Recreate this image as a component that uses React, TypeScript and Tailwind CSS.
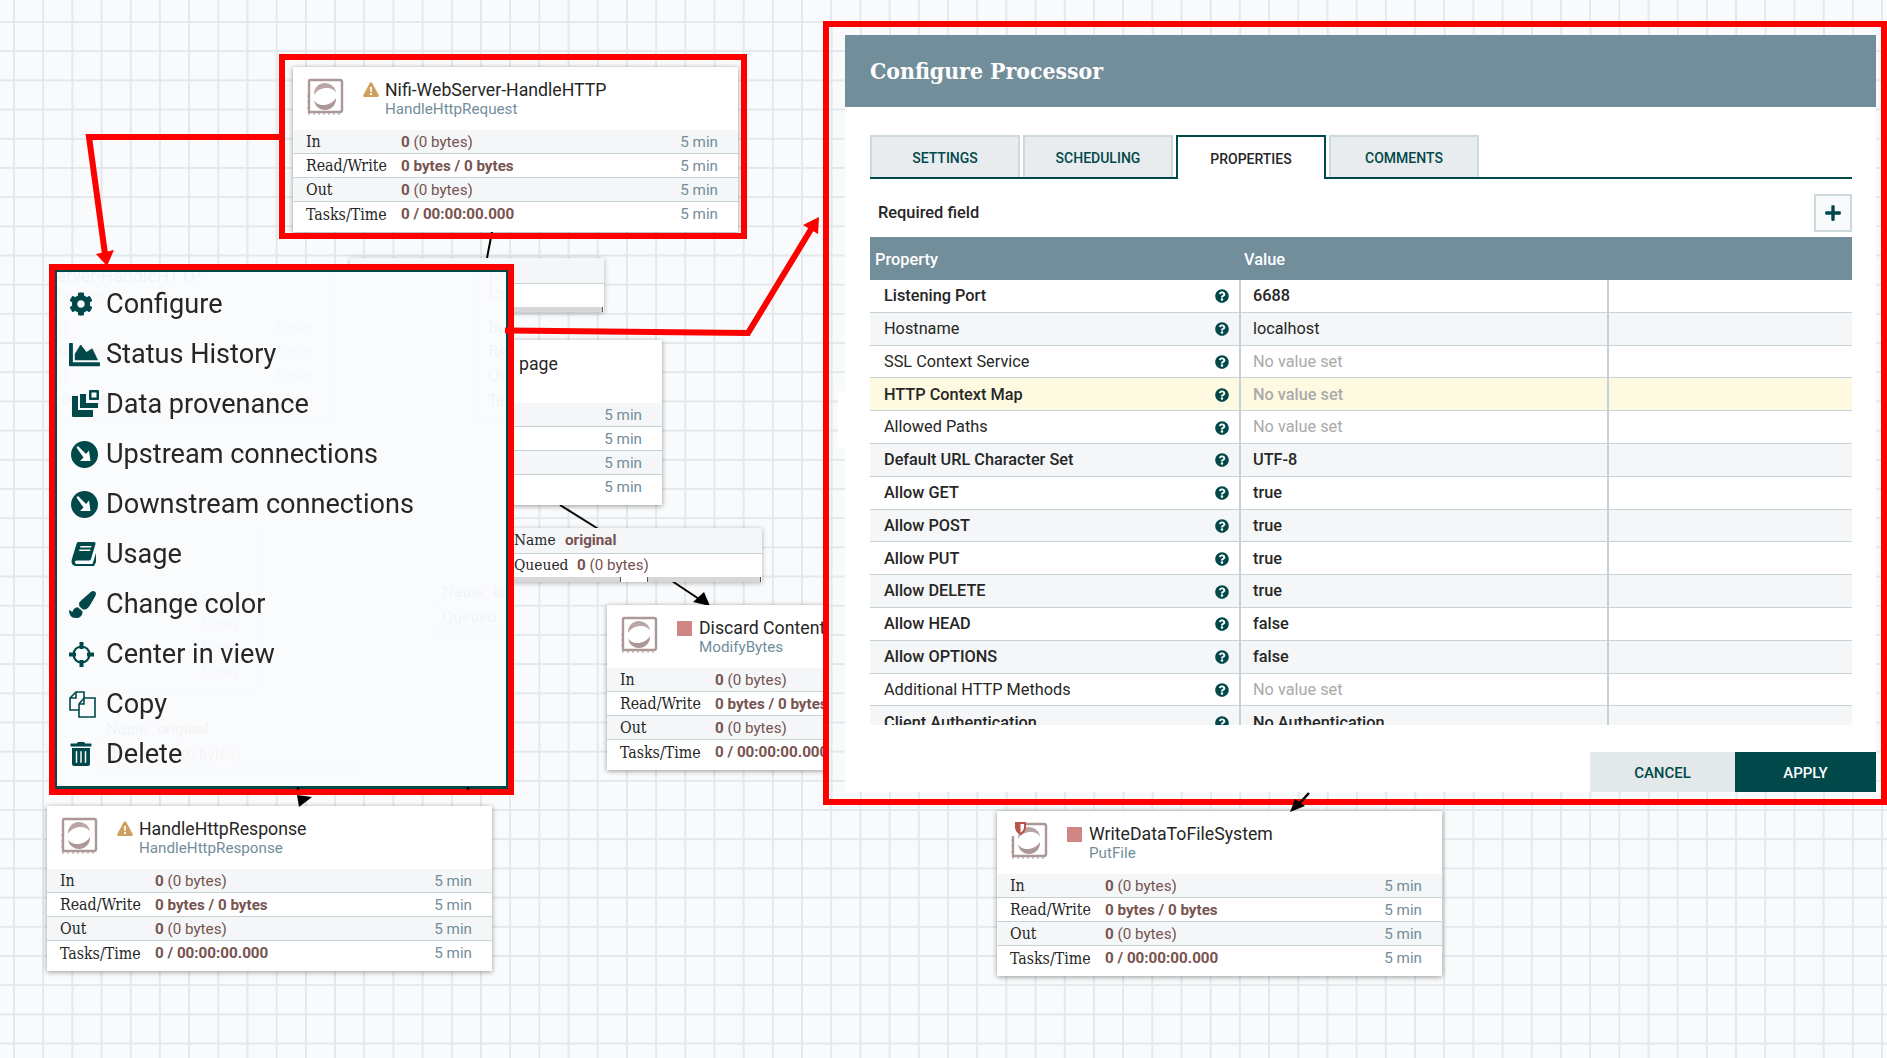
import type { ReactNode } from "react";
import { FaChartArea, FaCog, FaPaintBrush, FaPlus, FaQuestionCircle, FaTrashAlt } from "react-icons/fa";

const gridLines =
  "bg-[linear-gradient(to_right,#e3e8eb_1.5px,transparent_1.5px),linear-gradient(to_bottom,#e3e8eb_1.5px,transparent_1.5px)] bg-[size:29.2px_29.2px]";

const ProcessorIcon = ({ shield }: { shield?: boolean }) => (
  <svg className="h-[38px] w-[38px]" viewBox="0 0 38 38" fill="none">
    <path
      d={shield ? "M12 2H34Q36 2 36 4V32Q36 34 34 34H3V14" : "M4 2H34Q36 2 36 4V32Q36 34 34 34H3V4Q3 2 4 2Z"}
      stroke="#ad9897"
      strokeWidth="2.4"
    />
    <path d="M3 37V35M8 37V35M13 37V35M18 37V35M23 37V35M28 37V35M33 37V35M1 30H3M1 24H3M1 18H3" stroke="#ad9897" />
    <path d="M8 17A11 11 0 0 1 30 15C27 8 13 8 8 17Z" fill="#b9a6a5" />
    <path d="M30 20A11 11 0 0 1 8 22C11 29 25 29 30 20Z" fill="#ad9897" />
    {shield && <path d="M5 -1H16V6Q15 11 10.5 13Q6 11 5 6Z" fill="#ba554a" />}
    {shield && <path d="M10.5 2H14V6Q13.5 9 10.5 10.5Z" fill="#fff" />}
  </svg>
);

const WarningIcon = () => (
  <svg className="h-[15px] w-4" viewBox="0 0 16 15">
    <path d="M8 0.3Q8.8 0.3 9.2 1L15.7 13Q16.3 14.7 14.7 15H1.3Q-0.3 14.7 0.3 13L6.8 1Q7.2 0.3 8 0.3Z" fill="#cf9f5d" />
    <path d="M7 5H9L8.7 10H7.3ZM7 11H9V13H7Z" fill="#fff" />
  </svg>
);

const StatRow = ({ label, value, time, shaded }: { label: string; value: ReactNode; time?: string; shaded?: boolean }) => (
  <div className={`flex h-6 items-center border-b border-[#c7d2d7] pl-[13px] pr-5 pt-px last:h-[30px] last:border-b-0 last:pb-1.5 ${shaded ? "bg-[#f4f6f7]" : "bg-white"}`}>
    <span className="w-[95px] shrink-0 font-['DejaVu_Serif_Condensed','DejaVu_Serif',serif] text-[15.8px] text-[#262626]">{label}</span>
    <span className="flex-1 whitespace-nowrap font-['Roboto',sans-serif] text-[15.2px] text-[#775351]">{value}</span>
    {time && <span className="font-['Roboto',sans-serif] text-[15.2px] text-[#728e9b]">{time}</span>}
  </div>
);

const Bytes = () => (
  <>
    <b className="font-bold">0</b> (0 bytes)
  </>
);

const Stats = () => (
  <div>
    <StatRow label="In" value={<Bytes />} time="5 min" shaded />
    <StatRow label="Read/Write" value={<b className="font-bold">0 bytes / 0 bytes</b>} time="5 min" />
    <StatRow label="Out" value={<Bytes />} time="5 min" shaded />
    <StatRow label="Tasks/Time" value={<b className="font-bold">0 / 00:00:00.000</b>} time="5 min" />
  </div>
);

const Node = ({
  className,
  name,
  type,
  status,
  shield,
}: {
  className: string;
  name: string;
  type: string;
  status: "warning" | "stopped";
  shield?: boolean;
}) => (
  <div className={`absolute h-[165px] w-[445px] bg-white shadow-[0_1px_5px_rgba(0,0,0,0.4)] ${className}`}>
    <div className="flex h-[63px] pl-[13px] pt-[11px]">
      <ProcessorIcon shield={shield} />
      <div className="ml-[19px] mt-[4px] w-4">
        {status === "warning" ? <WarningIcon /> : <div className="mt-px h-[15px] w-[15px] bg-[#d18686]" />}
      </div>
      <div className="ml-[6px] whitespace-nowrap pt-[3px] font-['Roboto',sans-serif]">
        <div className="text-[17.7px] leading-[19px] text-[#262626]">{name}</div>
        <div className="text-[15.2px] leading-[19px] text-[#728e9b]">{type}</div>
      </div>
    </div>
    <Stats />
  </div>
);

const ConnectionCard = ({ className, name, queued }: { className: string; name?: string; queued?: boolean }) => (
  <div className={`absolute bg-white shadow-[0_1px_5px_rgba(0,0,0,0.3)] ${className}`}>
    <div className="flex h-[26px] items-center border-b border-[#c7d2d7] bg-[#f4f6f7] pl-[9px]">
      {name && (
        <>
          <span className="w-[51px] font-['DejaVu_Serif_Condensed','DejaVu_Serif',serif] text-[15.4px] text-[#262626]">Name</span>
          <b className="font-['Roboto',sans-serif] text-[15.2px] font-bold text-[#775351]">{name}</b>
        </>
      )}
    </div>
    <div className="flex h-[23px] items-center pl-[9px]">
      {queued && (
        <>
          <span className="w-[63px] font-['DejaVu_Serif_Condensed','DejaVu_Serif',serif] text-[15.4px] text-[#262626]">Queued</span>
          <span className="font-['Roboto',sans-serif] text-[15.2px] text-[#775351]">
            <Bytes />
          </span>
        </>
      )}
    </div>
    <div className="mx-px flex h-[5px] gap-[26px]">
      <div className="flex-1 border-x border-[#555] bg-[#d5d7d8]" />
      <div className="flex-1 border-x border-[#555] bg-[#d5d7d8]" />
    </div>
  </div>
);

// right part of the node that sits under the context menu
const PageNode = () => (
  <div className="absolute left-[505px] top-[340px] h-[165px] w-[157px] bg-white shadow-[0_1px_5px_rgba(0,0,0,0.4)]">
    <div className="h-[63px] pl-3.5 pt-[15px] font-['Roboto',sans-serif] text-[17.7px] leading-[19px] text-[#262626]">page</div>
    {[true, false, true, false].map((shaded, i) => (
      <div
        key={i}
        className={`flex h-6 items-center justify-end border-b border-[#c7d2d7] pr-5 pt-px font-['Roboto',sans-serif] text-[15.2px] text-[#728e9b] last:h-[30px] last:border-b-0 last:pb-1.5 ${shaded ? "bg-[#f4f6f7]" : "bg-white"}`}
      >
        5 min
      </div>
    ))}
  </div>
);

const ConnectionIcon = () => (
  <svg className="ml-0.5 h-[27px] w-[27px]" viewBox="0 0 27 27">
    <circle cx="13.5" cy="13.5" r="13.5" fill="#004849" />
    <path d="M5.5 6.5L7 5L15 13L18 9.5L19.5 20H9L12.5 16.5Z" fill="#fff" />
  </svg>
);

const ProvenanceIcon = () => (
  <svg className="ml-0.5 h-[28px] w-[28px]" viewBox="0 0 28 28" fill="#004849">
    <path d="M1 6H7V20H22V27H2Q1 27 1 26Z" />
    <path d="M9 4H15V13H27V18H9Z" />
    <path fillRule="evenodd" d="M19 0H27Q28 0 28 1V9Q28 10 27 10H19Q18 10 18 9V1Q18 0 19 0ZM20.5 2.5V7.5H25.5V2.5Z" />
  </svg>
);

const BookIcon = () => (
  <svg className="ml-0.5 h-6 w-[25px]" viewBox="0 0 25 24" fill="#004849">
    <path
      fillRule="evenodd"
      d="M7 0H23Q25 0 24.5 2L20 17Q19.5 18.5 18 18.5H6Q3.5 18.5 4 20.5Q4.5 22 6 22H21.5L25 11V20L23 24H5Q1 24 0.5 20Q0.5 18 1.5 15L5.5 2Q6 0 7 0ZM9.5 4L9 5.5H20L20.5 4ZM8.5 7.5L8 9H19L19.5 7.5Z"
    />
  </svg>
);

const CenterIcon = () => (
  <svg className="h-[25px] w-[25px]" viewBox="0 0 25 25" fill="none" stroke="#004849">
    <circle cx="12.5" cy="12.5" r="8" strokeWidth="2.2" />
    <path d="M12.5 0V7M12.5 18V25M0 12.5H7M18 12.5H25" strokeWidth="4" />
  </svg>
);

const CopyIcon = () => (
  <svg className="h-[27px] w-[27px]" viewBox="0 0 27 27" fill="none" stroke="#004849" strokeWidth="1.6">
    <path d="M10 19H1V7L7 1H15V7" />
    <path d="M7 1V7H1" />
    <path d="M10 26V13L15 7H26V26Z" />
    <path d="M15 7V13H10" />
  </svg>
);

const menuItems: { label: string; icon: ReactNode }[] = [
  { label: "Configure", icon: <FaCog className="text-[24px]" /> },
  { label: "Status History", icon: <FaChartArea className="text-[31px]" /> },
  { label: "Data provenance", icon: <ProvenanceIcon /> },
  { label: "Upstream connections", icon: <ConnectionIcon /> },
  { label: "Downstream connections", icon: <ConnectionIcon /> },
  { label: "Usage", icon: <BookIcon /> },
  { label: "Change color", icon: <FaPaintBrush className="text-[27px]" /> },
  { label: "Center in view", icon: <CenterIcon /> },
  { label: "Copy", icon: <CopyIcon /> },
  { label: "Delete", icon: <FaTrashAlt className="text-[24px]" /> },
];

const ContextMenu = () => (
  <div className="absolute left-[49px] top-[264px] h-[531px] w-[465px] border-[6px] border-[#ff0000]">
    <div className="relative h-full w-full overflow-hidden border-2 border-[#004849] border-b-[3px] bg-[#fafbfd]">
      {/* what lies under the translucent menu */}
      <div className="absolute inset-0 opacity-[0.04]">
        <Node className="left-[-169px] top-[-19px]" name="Nifi-WebServer-HandleHTTP" type="HandleHttpRequest" status="warning" />
        <Node className="left-[418px] top-[-19px]" name="Nifi-WebServer" type="HandleHttpRequest" status="warning" />
        <Node className="left-[-244px] top-[253px]" name="Nifi-WebServer" type="HandleHttpRequest" status="warning" />
        <ConnectionCard className="left-[40px] top-[445px] w-[257px]" name="original" queued />
        <ConnectionCard className="left-[376px] top-[308px] w-[257px]" name="binary" queued />
      </div>
      <div className="relative flex flex-col pt-[7px]">
        {menuItems.map((item) => (
          <div key={item.label} className="flex h-[50px] items-center font-['Roboto',sans-serif] text-[27.1px] text-[#262626]">
            <span className="flex w-[49px] shrink-0 items-center pl-3 text-[#004849]">{item.icon}</span>
            {item.label}
          </div>
        ))}
      </div>
    </div>
  </div>
);

type Property = { name: string; value: string; required?: boolean; unset?: boolean; highlight?: boolean };

const properties: Property[] = [
  { name: "Listening Port", value: "6688", required: true },
  { name: "Hostname", value: "localhost" },
  { name: "SSL Context Service", value: "No value set", unset: true },
  { name: "HTTP Context Map", value: "No value set", required: true, unset: true, highlight: true },
  { name: "Allowed Paths", value: "No value set", unset: true },
  { name: "Default URL Character Set", value: "UTF-8", required: true },
  { name: "Allow GET", value: "true", required: true },
  { name: "Allow POST", value: "true", required: true },
  { name: "Allow PUT", value: "true", required: true },
  { name: "Allow DELETE", value: "true", required: true },
  { name: "Allow HEAD", value: "false", required: true },
  { name: "Allow OPTIONS", value: "false", required: true },
  { name: "Additional HTTP Methods", value: "No value set", unset: true },
  { name: "Client Authentication", value: "No Authentication", required: true },
];

const PropertyRow = ({ property, index }: { property: Property; index: number }) => {
  const bg = property.highlight ? "bg-[#fef9e1]" : index % 2 ? "bg-[#f4f6f7]" : "bg-white";
  const weight = property.required ? "font-medium" : "font-normal";
  return (
    <div className={`flex h-[32.8px] shrink-0 items-center border-b border-[#c7d2d7] text-[16.3px] ${bg}`}>
      <div className={`flex h-full w-[371px] items-center border-r-2 border-[#c7d2d7] pl-[14px] pr-[10px] pt-px text-[#262626] ${weight}`}>
        <span className="flex-1">{property.name}</span>
        <FaQuestionCircle className="text-[14px] text-[#004849]" />
      </div>
      <div className={`flex h-full w-[368px] items-center border-r-2 border-[#c7d2d7] pl-3 pt-px ${weight} ${property.unset ? "text-[#aaaaaa]" : "text-[#262626]"}`}>
        {property.value}
      </div>
    </div>
  );
};

const tabs = ["SETTINGS", "SCHEDULING", "PROPERTIES", "COMMENTS"];

const ConfigureDialog = () => (
  <div className={`absolute left-[823px] top-[21px] h-[784px] w-[1064px] border-[6px] border-[#ff0000] bg-[#f9fafb] bg-[position:1.6px_23.2px] ${gridLines}`}>
    <div className="absolute left-[9px] top-[364px] h-[57px] w-[8px] rounded-l bg-white" />
    <div className="absolute bottom-[7px] left-[16px] right-[5px] top-[8px] flex flex-col bg-white font-['Roboto',sans-serif]">
      <div className="flex h-[72px] shrink-0 items-center bg-[#728e9b] pl-[25px] font-['DejaVu_Serif_Condensed','DejaVu_Serif',serif] text-[22.8px] font-bold text-white">
        Configure Processor
      </div>
      <div className="flex h-[645px] flex-col pl-[25px] pr-6 pt-7">
        <div className="flex h-11 shrink-0 gap-[3px] border-b-2 border-[#004849]">
          {tabs.map((tab) => (
            <div
              key={tab}
              className={
                tab === "PROPERTIES"
                  ? "z-10 -mb-0.5 flex w-[150px] items-center justify-center border-2 border-b-0 border-[#004849] bg-white pt-px text-sm font-medium text-[#262626]"
                  : "flex w-[150px] items-center justify-center border-2 border-b-0 border-[#ccdadb] bg-[#e9ecef] pt-px text-sm font-medium text-[#004849]"
              }
            >
              {tab}
            </div>
          ))}
        </div>
        <div className="flex h-[58px] shrink-0 items-center justify-between pb-[5px] pl-2 pt-[15px]">
          <b className="text-[16.4px] font-medium text-[#262626]">Required field</b>
          <div className="flex h-[38px] w-[38px] items-center justify-center border-2 border-[#ccdadb] bg-[#f9fafb] text-[#004849]">
            <FaPlus className="text-[18px]" />
          </div>
        </div>
        <div className="flex h-[43px] shrink-0 items-center bg-[#728e9b] pt-[3px] text-[16.4px] font-medium text-white">
          <span className="w-[371px] pl-[5px]">Property</span>
          <span className="pl-[3px]">Value</span>
        </div>
        <div className="flex h-[445px] flex-col overflow-hidden">
          {properties.map((property, i) => (
            <PropertyRow key={property.name} property={property} index={i} />
          ))}
        </div>
      </div>
      <div className="mt-auto flex h-10 shrink-0 justify-end text-[15px] font-medium">
        <div className="flex w-[145px] items-center justify-center bg-[#e3e8eb] pt-[3px] text-[#004849]">CANCEL</div>
        <div className="flex w-[141px] items-center justify-center bg-[#004849] pt-[3px] text-white">APPLY</div>
      </div>
    </div>
  </div>
);

const Connectors = () => (
  <svg className="absolute inset-0 h-full w-full" fill="none">
    <path d="M492 232L487 258M560 505L600 530M672 581L705 603" stroke="#000" strokeWidth="2" />
    <path d="M710 606L693 602L704 592Z" fill="#000" />
  </svg>
);

const Annotations = () => (
  <svg className="absolute inset-0 h-full w-full" fill="none">
    <path d="M282 137H89L105 254" stroke="#ff0000" strokeWidth="6" />
    <path d="M96 254L114 250L107 266Z" fill="#ff0000" />
    <path d="M505 330.5L748 333L813 226" stroke="#ff0000" strokeWidth="6" />
    <path d="M819 217L818 234L803 225Z" fill="#ff0000" />
    {/* connectors that come out over the boxes */}
    <path d="M298 787V790M468 787V790M1309 793L1296 807" stroke="#000" strokeWidth="2.5" />
    <path d="M299 807L297 795L312 797Z" fill="#000" />
    <path d="M1290 812L1295 799L1305 806Z" fill="#000" />
  </svg>
);

export default function App() {
  return (
    <div className={`relative h-[1058px] w-full overflow-hidden bg-[#f9fafb] bg-[position:13px_21px] ${gridLines}`}>
      <Connectors />
      <PageNode />
      <ConnectionCard className="left-[350px] top-[258px] w-[254px]" />
      <ConnectionCard className="left-[505px] top-[528px] w-[257px]" name="original" queued />
      <Node className="left-[293px] top-[67px]" name="Nifi-WebServer-HandleHTTP" type="HandleHttpRequest" status="warning" />
      <Node className="left-[607px] top-[605px]" name="Discard Content" type="ModifyBytes" status="stopped" />
      <Node className="left-[47px] top-[806px]" name="HandleHttpResponse" type="HandleHttpResponse" status="warning" />
      <Node className="left-[997px] top-[811px]" name="WriteDataToFileSystem" type="PutFile" status="stopped" shield />
      <div className="absolute left-[279px] top-[54px] h-[185px] w-[468px] border-[6px] border-[#ff0000]" />
      <ContextMenu />
      <ConfigureDialog />
      <Annotations />
    </div>
  );
}
